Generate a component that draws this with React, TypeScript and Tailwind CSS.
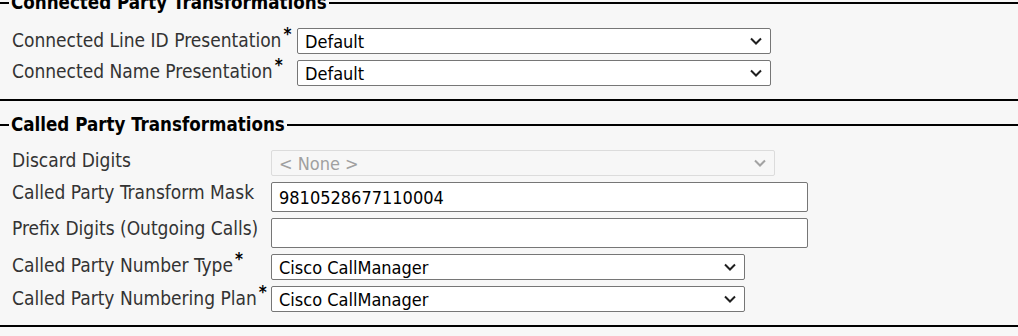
import React from "react"

const font = { fontFamily: '"DejaVu Sans Condensed", "DejaVu Sans", Verdana, sans-serif' }

type Field =
  | { kind: "select"; value: string; width: string; disabled?: boolean }
  | { kind: "input"; value: string; width: string }

type Row = { label: string; required?: boolean; nudge: string; field: Field }

const connectedRows: Row[] = [
  { label: "Connected Line ID Presentation", required: true, nudge: "-mt-[2px]", field: { kind: "select", value: "Default", width: "w-[474px]" } },
  { label: "Connected Name Presentation", required: true, nudge: "-mt-[3px]", field: { kind: "select", value: "Default", width: "w-[474px]" } },
]

const calledRows: Row[] = [
  { label: "Discard Digits", nudge: "mt-0", field: { kind: "select", value: "< None >", width: "w-[504px]", disabled: true } },
  { label: "Called Party Transform Mask", nudge: "mt-0", field: { kind: "input", value: "9810528677110004", width: "w-[537px]" } },
  { label: "Prefix Digits (Outgoing Calls)", nudge: "mt-0", field: { kind: "input", value: "", width: "w-[537px]" } },
  { label: "Called Party Number Type", required: true, nudge: "-mt-[3px]", field: { kind: "select", value: "Cisco CallManager", width: "w-[474px]" } },
  { label: "Called Party Numbering Plan", required: true, nudge: "-mt-[2px]", field: { kind: "select", value: "Cisco CallManager", width: "w-[474px]" } },
]

function cn(...c: (string | false | undefined)[]) {
  return c.filter(Boolean).join(" ")
}

function Chevron({ muted }: { muted?: boolean }) {
  return (
    <svg width="12" height="8" viewBox="0 0 12 8" className="shrink-0">
      <path d="M1 1.5 L6 6.5 L11 1.5" fill="none" stroke={muted ? "#a3a3a3" : "#1f1f1f"} strokeWidth="2" />
    </svg>
  )
}

function FieldBox({ field }: { field: Field }) {
  if (field.kind === "input") {
    return (
      <div className={`${field.width} h-[30px] flex items-center px-[7px] bg-white border border-[#767676] rounded-[2px] text-[18px] text-black`}>
        {field.value}
      </div>
    )
  }
  return (
    <div
      className={cn(
        field.width,
        "h-[26px] flex items-center justify-between pl-[7px] pr-[8px] rounded-[2px] text-[18px] border",
        field.disabled ? "bg-[#f7f7f7] border-[#dcdcdc] text-[#a0a0a0]" : "bg-white border-[#767676] text-black"
      )}
    >
      <span>{field.value}</span>
      <Chevron muted={field.disabled} />
    </div>
  )
}

function Section({ title, rows, labelWidth, className }: { title: string; rows: Row[]; labelWidth: string; className?: string }) {
  return (
    <fieldset className={cn("border-y-2 border-x-0 border-black pt-[16px] pb-[13px]", className)}>
      <legend className="ml-[9px] px-[2px] text-[18.6px] leading-[18px] font-bold text-black">{title}</legend>
      <div className="flex flex-col gap-[6px] pl-[12px]">
        {rows.map((row) => (
          <div key={row.label} className="flex items-start">
            <div className={cn(labelWidth, row.nudge, "shrink-0 text-[19px] leading-[20px] text-[#333]")}>
              {row.label}
              {row.required && <span className="ml-[2px] align-super text-[17px] font-bold leading-none text-black">*</span>}
            </div>
            <FieldBox field={row.field} />
          </div>
        ))}
      </div>
    </fieldset>
  )
}

export default function App() {
  return (
    <div className="w-[1018px] h-[336px] overflow-hidden bg-[#f7f7f7]" style={font}>
      <Section title="Connected Party Transformations" rows={connectedRows} labelWidth="w-[285px]" className="-mt-[6px]" />
      <Section title="Called Party Transformations" rows={calledRows} labelWidth="w-[259px]" className="mt-[15px]" />
    </div>
  )
}
